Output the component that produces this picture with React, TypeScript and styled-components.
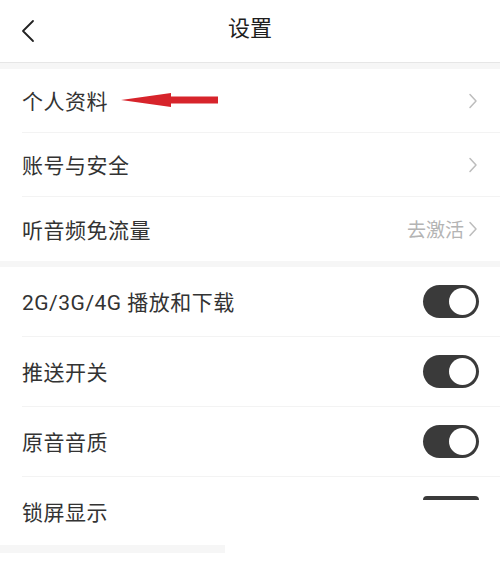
import React from 'react';
import styled, { createGlobalStyle } from 'styled-components';

const GlobalStyle = createGlobalStyle`
  html, body {
    margin: 0;
    padding: 0;
    background: #ffffff;
  }
  body {
    font-family: Roboto, "Noto Sans CJK SC", sans-serif;
  }
`;

const Page = styled.div`
  width: 500px;
  height: 575px;
  overflow: hidden;
  background: #ffffff;
  display: flex;
  flex-direction: column;
`;

const Header = styled.header`
  height: 62px;
  flex-shrink: 0;
  display: grid;
  grid-template-columns: 60px 1fr 60px;
  align-items: center;
  border-bottom: 1px solid #e6e6e6;
`;

const BackButton = styled.button`
  border: 0;
  background: none;
  padding: 0 0 0 20px;
  height: 100%;
  display: flex;
  align-items: center;
  cursor: pointer;
`;

const Title = styled.h1`
  margin: 0;
  text-align: center;
  font-size: 22px;
  font-weight: 400;
  color: #1e1e1e;
  line-height: 1;
  padding-bottom: 4px;
`;

const Gap = styled.div<{ $h: number }>`
  height: ${(p) => p.$h}px;
  flex-shrink: 0;
  background: #f6f6f6;
`;

const Section = styled.section`
  background: #ffffff;
  display: flex;
  flex-direction: column;
`;

const Row = styled.div<{ $h: number; $last?: boolean }>`
  height: ${(p) => p.$h}px;
  flex-shrink: 0;
  margin-left: 22px;
  padding-right: 22px;
  display: flex;
  align-items: center;
  border-bottom: ${(p) => (p.$last ? 'none' : '1px solid #f3f3f3')};
  box-sizing: border-box;
`;

const Label = styled.span`
  font-size: 21px;
  color: #333333;
  line-height: 1;
  letter-spacing: 0.5px;
  margin-top: 4px;
`;

const Right = styled.div<{ $top?: boolean }>`
  margin-left: auto;
  display: flex;
  align-items: center;
  align-self: ${(p) => (p.$top ? 'stretch' : 'center')};
  gap: 4px;
`;

const Hint = styled.span`
  font-size: 19px;
  color: #b4b4b4;
  line-height: 1;
  margin-top: 3px;
`;

const Switch = styled.div<{ $cut?: boolean }>`
  width: 56px;
  height: ${(p) => (p.$cut ? '4px' : '33px')};
  border-radius: 17px 17px ${(p) => (p.$cut ? '0 0' : '17px 17px')};
  background: #3a3a3a;
  position: relative;
  align-self: ${(p) => (p.$cut ? 'flex-start' : 'center')};
  margin-top: ${(p) => (p.$cut ? '19px' : '0')};
  margin-right: -1px;

  &::after {
    content: '';
    display: ${(p) => (p.$cut ? 'none' : 'block')};
    position: absolute;
    top: 3px;
    right: 3px;
    width: 27px;
    height: 27px;
    border-radius: 50%;
    background: #ffffff;
  }
`;

const Footer = styled.div`
  flex: 1;
  display: flex;
  flex-direction: column;
`;

const FooterStrip = styled.div`
  width: 225px;
  height: 8px;
  background: #f6f6f6;
`;

const Annotation = styled.svg`
  margin-left: 13px;
  margin-top: -2px;
`;

const BackIcon = () => (
  <svg width="16" height="24" viewBox="0 0 16 24">
    <path d="M13 2 L3 12 L13 22" fill="none" stroke="#222" strokeWidth="1.8" strokeLinecap="round" strokeLinejoin="round" />
  </svg>
);

const Chevron = () => (
  <svg width="10" height="16" viewBox="0 0 10 16">
    <path d="M2 1.5 L8 8 L2 14.5" fill="none" stroke="#bdbdbd" strokeWidth="1.5" strokeLinecap="round" strokeLinejoin="round" />
  </svg>
);

const RedArrow = () => (
  <Annotation width="98" height="16" viewBox="0 0 98 16">
    <path d="M0 8 L50 1 L50 4.5 L97 4.5 L97 11.5 L50 11.5 L50 15 Z" fill="#d7242b" />
  </Annotation>
);

const App = () => {
  return (
    <>
      <GlobalStyle />
      <Page>
        <Header>
          <BackButton aria-label="返回">
            <BackIcon />
          </BackButton>
          <Title>设置</Title>
          <div />
        </Header>
        <Gap $h={6} />
        <Section>
          <Row $h={64}>
            <Label>个人资料</Label>
            <RedArrow />
            <Right>
              <Chevron />
            </Right>
          </Row>
          <Row $h={64}>
            <Label>账号与安全</Label>
            <Right>
              <Chevron />
            </Right>
          </Row>
          <Row $h={64} $last>
            <Label>听音频免流量</Label>
            <Right>
              <Hint>去激活</Hint>
              <Chevron />
            </Right>
          </Row>
        </Section>
        <Gap $h={6} />
        <Section>
          <Row $h={70}>
            <Label>2G/3G/4G 播放和下载</Label>
            <Right>
              <Switch />
            </Right>
          </Row>
          <Row $h={70}>
            <Label>推送开关</Label>
            <Right>
              <Switch />
            </Right>
          </Row>
          <Row $h={70}>
            <Label>原音音质</Label>
            <Right>
              <Switch />
            </Right>
          </Row>
          <Row $h={68} $last>
            <Label>锁屏显示</Label>
            <Right $top>
              <Switch $cut />
            </Right>
          </Row>
        </Section>
        <Footer>
          <FooterStrip />
        </Footer>
      </Page>
    </>
  );
};

export default App;
